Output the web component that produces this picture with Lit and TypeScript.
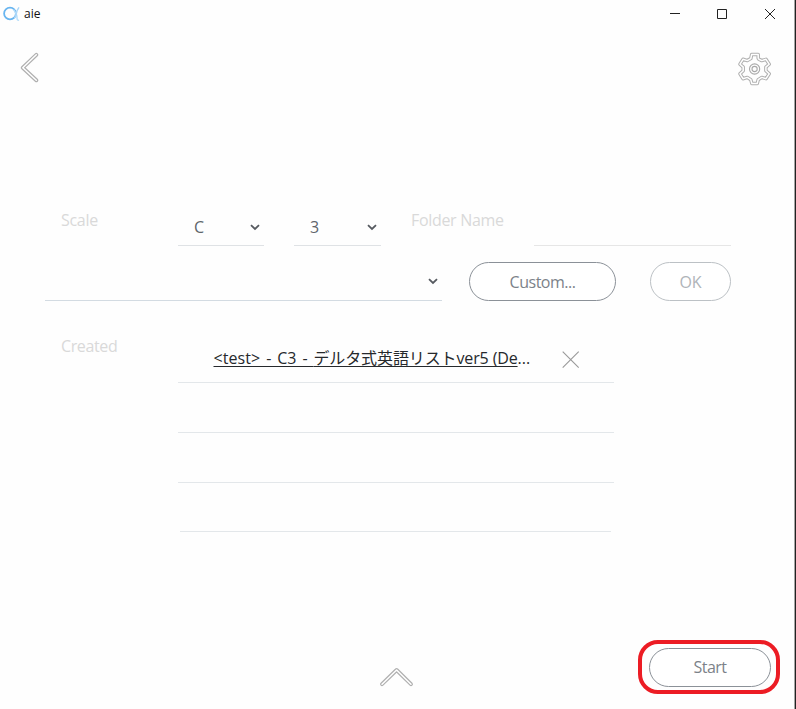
import { LitElement, html, css, svg } from "lit";
import { customElement } from "lit/decorators.js";

const caret = html`<svg class="caret" width="10" height="7" viewBox="0 0 10 7">
  <path d="M1 1.2 5 5 9 1.2" fill="none" stroke="#565a60" stroke-width="1.8" />
</svg>`;

// A hollow line: a wide grey stroke with a narrower white one on top.
const hollow = (d: string, outer = 3.9, inner = 1.5) => svg`
  <path d=${d} fill="none" stroke="#b0b0b0" stroke-width=${outer} stroke-linecap="round" stroke-linejoin="round" />
  <path d=${d} fill="none" stroke="#fff" stroke-width=${inner} stroke-linecap="round" stroke-linejoin="round" />`;

const gear =
  "M20.2 6.2 V2.4 H13.7 L12.8 6.6 L9.3 8.6 L5 7.3 L2 12.2 L5.2 15.1 V18.7 L2 21.8 L5 26.7 L9.3 25.4 L12.8 27.7 L13.9 31.6 H19.2 L20.2 27.7 L23.8 25.4 L28 26.7 L31.2 21.8 L27.9 18.7 V15.1 L31.2 12.2 L28 7.3 L23.8 8.6 L20.9 7.2";

@customElement("app-root")
export class AppRoot extends LitElement {
  static styles = css`
    :host {
      display: block;
      box-sizing: border-box;
      width: 796px;
      height: 709px;
      overflow: hidden;
      background: #fefefe;
      border-right: 1px solid #222;
      box-shadow: inset -1px 0 #a5a5a5;
      font: 16px/20px "Open Sans", "Noto Sans CJK JP", sans-serif;
      color: #60656b;
    }
    svg { display: block; flex: none; }
    .window { display: flex; flex-direction: column; height: 100%; }
    .titlebar { display: flex; align-items: center; height: 27px; padding: 0 19px 0 3px; }
    .title { flex: 1; margin-left: 4px; font-size: 12px; line-height: 16px; color: #111; }
    .controls { display: flex; gap: 36px; }
    .nav { display: flex; justify-content: space-between; height: 60px; padding: 25px 23px 0 20px; box-sizing: border-box; }
    .form { display: flex; height: 40px; margin: 119px 64px 0 61px; }
    .label { color: #d9d9d9; white-space: nowrap; }
    .scale { width: 117px; padding-top: 4px; letter-spacing: -0.3px; }
    .select { display: flex; align-items: center; justify-content: space-between; box-sizing: border-box; border-bottom: 1px solid #dfe2e5; }
    .small { height: 40px; padding: 3px 4px 0 16px; }
    .small .caret { margin-top: 1px; }
    .letter { width: 86px; margin-right: 30px; }
    .number { width: 87px; margin-right: 30px; }
    .folder { width: 123px; padding-top: 4px; letter-spacing: -0.32px; }
    .input { width: 197px; box-sizing: border-box; border-bottom: 1px solid #e6e6e6; }
    .actions { display: flex; height: 39px; margin: 16px 64px 0 45px; }
    .source { width: 397px; padding-right: 4px; justify-content: flex-end; border-color: #d3dbe2; }
    .button { display: flex; align-items: center; justify-content: center; box-sizing: border-box; height: 39px; border: 1px solid #8b9198; border-radius: 20px; background: #fff; color: #7c8289; }
    .custom { width: 147px; margin: 0 34px 0 27px; letter-spacing: -0.5px; }
    .ok { width: 81px; border-color: #bcc1c5; color: #afb4b9; }
    .created { display: flex; margin: 31px 0 0 61px; }
    .created-label { width: 117px; padding-top: 4px; letter-spacing: -0.38px; }
    .list { width: 436px; padding-top: 1px; }
    .row { display: flex; box-sizing: border-box; height: 50px; border-bottom: 1px solid #e3e7ea; }
    .row.last { height: 49px; margin: 0 3px 0 2px; }
    .entry { width: 348px; padding: 15px 0 0 35.5px; box-sizing: border-box; color: #26292c; white-space: nowrap; }
    .link { text-decoration: underline; text-underline-offset: 2px; text-decoration-thickness: 1px; text-decoration-skip-ink: none; }
    .prefix { letter-spacing: 0.08px; word-spacing: 1.6px; }
    .rest { letter-spacing: -0.12px; }
    .remove { margin: 18px 0 0 36px; }
    .footer { display: flex; margin-top: 108px; padding-left: 379px; }
    .up { margin-top: 26px; }
    .highlight { display: flex; align-items: center; justify-content: center; box-sizing: border-box; width: 142px; height: 54px; margin-left: 223px; padding-left: 2px; border: 4px solid #ec1c24; border-radius: 20px; }
    .start { width: 122px; letter-spacing: -0.5px; }
  `;

  render() {
    return html`<div class="window">
      <div class="titlebar">
        <svg width="17" height="16" viewBox="0 0 17 16" fill="none">
          <circle cx="7" cy="7.5" r="5.9" stroke="#68b5f0" stroke-width="1.8" />
          <path d="M10.5 3.6Q14 8 14 11.5T16 14.2" stroke="#b9dffa" stroke-width="1.5" />
          <path d="M16 1.4Q14 4 13.2 8T11 12" stroke="#a9d6f8" stroke-width="1.5" />
        </svg>
        <div class="title">aie</div>
        <div class="controls">
          <svg width="12" height="12"><path d="M2 5.5h10" stroke="#222" /></svg>
          <svg width="12" height="12"><path d="M1.5 1.5h9v9h-9z" fill="none" stroke="#222" /></svg>
          <svg width="12" height="12"><path d="M1 1l10 10M11 1L1 11" stroke="#222" /></svg>
        </div>
      </div>
      <div class="nav">
        <svg width="19" height="32">${hollow("M16.3 2.8 2.8 15.7 16.3 28.3")}</svg>
        <svg width="34" height="34">
          ${hollow(gear, 3.5, 1.5)}
          <circle cx="16.6" cy="17" r="5.1" fill="none" stroke="#a9a9a9" stroke-width="1.1" />
          <circle cx="16.6" cy="17" r="2.6" fill="none" stroke="#a9a9a9" stroke-width="1.1" />
        </svg>
      </div>
      <div class="form">
        <div class="label scale">Scale</div>
        <div class="select small letter"><span>C</span>${caret}</div>
        <div class="select small number"><span>3</span>${caret}</div>
        <div class="label folder">Folder Name</div>
        <div class="input"></div>
      </div>
      <div class="actions">
        <div class="select source">${caret}</div>
        <div class="button custom">Custom...</div>
        <div class="button ok">OK</div>
      </div>
      <div class="created">
        <div class="label created-label">Created</div>
        <div class="list">
          <div class="row">
            <div class="entry"><span class="link"><span class="prefix">&lt;test&gt; - C3 - </span><span class="rest">デルタ式英語リストver5 (De</span></span>...</div>
            <svg class="remove" width="18" height="18"><path d="M.7.7l16 16M16.7.7l-16 16" stroke="#999" stroke-width="1.1" /></svg>
          </div>
          <div class="row"></div>
          <div class="row"></div>
          <div class="row last"></div>
        </div>
      </div>
      <div class="footer">
        <svg class="up" width="36" height="22">${hollow("M3 18.2 17.6 4 32 18.2")}</svg>
        <div class="highlight"><div class="button start">Start</div></div>
      </div>
    </div>`;
  }
}
